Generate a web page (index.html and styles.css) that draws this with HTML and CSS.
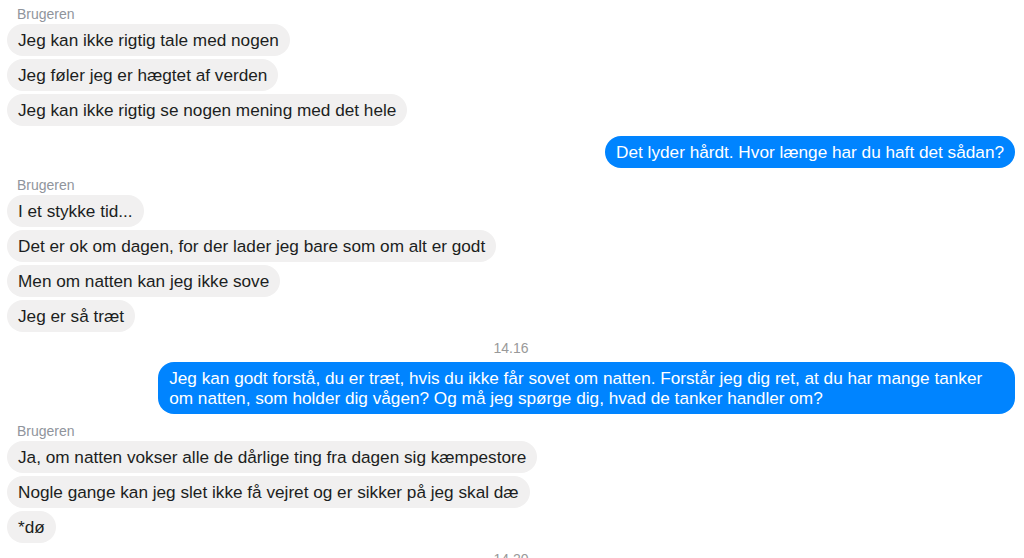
FILE: index.html
```html
<!DOCTYPE html>
<html lang="da">
<head>
    <meta charset="UTF-8">
    <meta name="viewport" content="width=device-width, initial-scale=1.0">
    <title>Samtale</title>
    <link rel="stylesheet" href="styles.css">
</head>
<body>
    <div class="chat">
        <div class="sender first">Brugeren</div>
        <div class="row in first"><div class="bubble">Jeg kan ikke rigtig tale med nogen</div></div>
        <div class="row in"><div class="bubble">Jeg føler jeg er hægtet af verden</div></div>
        <div class="row in"><div class="bubble">Jeg kan ikke rigtig se nogen mening med det hele</div></div>

        <div class="row out"><div class="bubble">Det lyder hårdt. Hvor længe har du haft det sådan?</div></div>

        <div class="sender">Brugeren</div>
        <div class="row in first"><div class="bubble">I et stykke tid...</div></div>
        <div class="row in"><div class="bubble">Det er ok om dagen, for der lader jeg bare som om alt er godt</div></div>
        <div class="row in"><div class="bubble">Men om natten kan jeg ikke sove</div></div>
        <div class="row in"><div class="bubble">Jeg er så træt</div></div>

        <div class="time">14.16</div>
        <div class="row out after-time"><div class="bubble">Jeg kan godt forstå, du er træt, hvis du ikke får sovet om natten. Forstår jeg dig ret, at du har mange tanker om natten, som holder dig vågen? Og må jeg spørge dig, hvad de tanker handler om?</div></div>

        <div class="sender">Brugeren</div>
        <div class="row in first"><div class="bubble">Ja, om natten vokser alle de dårlige ting fra dagen sig kæmpestore</div></div>
        <div class="row in"><div class="bubble">Nogle gange kan jeg slet ikke få vejret og er sikker på jeg skal dæ</div></div>
        <div class="row in"><div class="bubble">*dø</div></div>

        <div class="time">14.20</div>
    </div>
</body>
</html>
```

FILE: styles.css
```css
body {
    margin: 0;
    font-family: "Liberation Sans", Arial, sans-serif;
    background: #fff;
    overflow: hidden;
}
.chat {
    padding: 6px 9px 0 7px;
}
.sender {
    margin-top: 9px;
    padding-left: 10px;
    font-size: 14px;
    line-height: 16px;
    color: #90949c;
}
.sender.first {
    margin-top: 0;
}
.row {
    display: flex;
    margin-top: 3px;
}
.row.first {
    margin-top: 2px;
}
.row.in {
    justify-content: flex-start;
}
.row.out {
    justify-content: flex-end;
    margin-top: 10px;
}
.row.out.after-time {
    margin-top: 6px;
}
.bubble {
    box-sizing: border-box;
    max-width: 85%;
    padding: 6px 11px;
    border-radius: 16px;
    font-size: 17.2px;
    line-height: 20px;
    background: #f1f0f0;
    color: #1c1e21;
}
.out .bubble {
    background: #0084ff;
    color: #fff;
}
.time {
    margin-top: 8px;
    text-align: center;
    font-size: 14px;
    line-height: 16px;
    color: #999;
}
```
